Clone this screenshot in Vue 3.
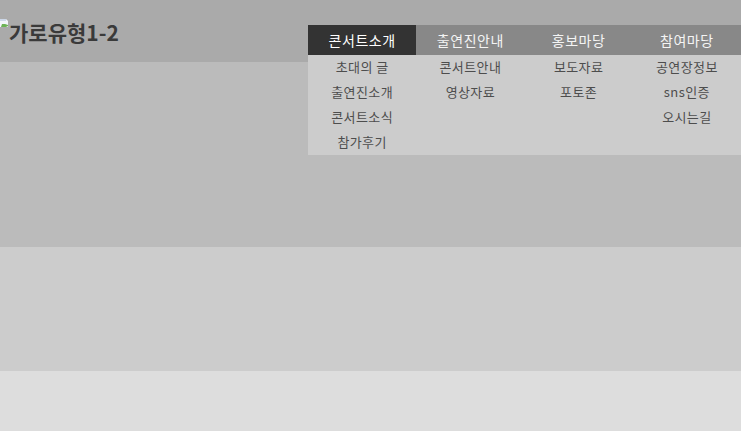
<template>
  <div class="page">
    <header class="band band-top">
      <h1 class="logo">
        <svg class="broken-img" width="9" height="9" viewBox="0 0 9 9">
          <path d="M0 0h6l2 2v6H0z" fill="#f2f5fa" />
          <path d="M0 0h6v2H0z" fill="#ccd7e8" />
          <path d="M1 8l1-3h3l3 1v1l-2 1z" fill="#6cb356" />
        </svg>
        <span>가로유형1-2</span>
      </h1>
      <nav class="menu">
        <div v-for="(col, index) in menu" :key="col.title" class="menu-col">
          <a href="#" class="menu-title" :class="{ active: index === 0 }">{{ col.title }}</a>
          <ul class="sub">
            <li v-for="item in col.items" :key="item"><a href="#">{{ item }}</a></li>
          </ul>
        </div>
      </nav>
    </header>
    <section class="band band-second"></section>
    <section class="band band-third"></section>
    <section class="band band-fourth"></section>
  </div>
</template>

<script setup>
const menu = [
  { title: '콘서트소개', items: ['초대의 글', '출연진소개', '콘서트소식', '참가후기'] },
  { title: '출연진안내', items: ['콘서트안내', '영상자료'] },
  { title: '홍보마당', items: ['보도자료', '포토존'] },
  { title: '참여마당', items: ['공연장정보', 'sns인증', '오시는길'] }
]
</script>

<style>
html, body { margin: 0; padding: 0; background: #fff; overflow: hidden; }
</style>

<style scoped>
* { box-sizing: border-box; }
.page { width: 741px; font-family: "Noto Sans CJK KR", "Noto Sans", sans-serif; }
.band { width: 100%; }
.band-top { height: 62px; background: #aaa; display: flex; justify-content: space-between; align-items: flex-start; }
.band-second { height: 185px; background: #bbb; }
.band-third { height: 124px; background: #ccc; }
.band-fourth { height: 60px; background: #ddd; }

.logo { margin: 0; padding-top: 18px; font-size: 21px; line-height: 28px; font-weight: 700; color: #3a3a3a; display: flex; align-items: flex-start; }
.broken-img { margin-top: 1px; flex: none; }

.menu { width: 433px; margin-top: 25px; display: grid; grid-template-columns: repeat(4, 1fr); background: #ccc; height: 130px; }
.menu-title { display: block; height: 30px; line-height: 30px; text-align: center; background: #888; color: #f4f4f4; font-size: 14px; letter-spacing: 0.6px; text-decoration: none; }
.menu-title.active { background: #333; color: #fff; }
.sub { list-style: none; margin: 0; padding: 0; }
.sub li { height: 25px; line-height: 23px; text-align: center; font-size: 13px; letter-spacing: 0.4px; }
.sub a { color: #4d4d4d; text-decoration: none; }
</style>
